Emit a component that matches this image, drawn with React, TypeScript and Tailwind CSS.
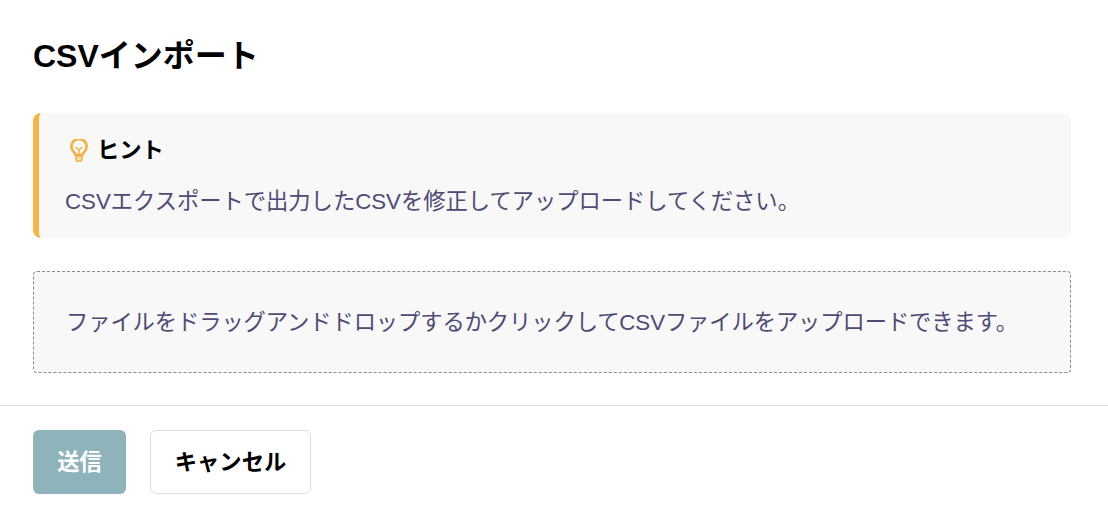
export default function App() {
  const font = { fontFamily: '"Liberation Sans", "Noto Sans CJK JP", sans-serif' };
  return (
    <div style={font} className="w-[1108px] h-[518px] bg-white flex flex-col overflow-hidden">
      <div className="pl-[33px] pr-[37px] pt-[33px] flex flex-col">
        <h1 className="text-[32px] leading-[44px] font-bold text-black h-[44px] pt-[1px]">CSVインポート</h1>
        <div className="mt-[36px] h-[125px] rounded-[8px] bg-[#f8f8f8] border-l-[6px] border-[#f6b445] pl-[26px] pt-[22px] flex flex-col">
          <div className="flex items-center h-[32px] gap-[7px]">
            <svg width="22" height="24" viewBox="0 0 22 24" fill="none" stroke="#f6b042" strokeWidth="2.6" strokeLinecap="round" strokeLinejoin="round" className="ml-[3px]">
              <path d="M7.6 16c0-1.500-.9-2.200-2.100-3.300a7.600 7.600 0 1 1 11 0c-1.200 1.100-2.100 1.800-2.100 3.300z" />
              <path d="M8 17h6v3.600a1.600 1.600 0 0 1-1.600 1.600H9.600a1.600 1.600 0 0 1-1.600-1.600z" strokeWidth="1.500" fill="#fbdca8" />
              <path d="M11 15.500v-4.500M8.200 8.500 11 11l2.800-2.500" strokeWidth="1.500" />
            </svg>
            <span className="text-[22.3px] font-bold text-black leading-[32px]">ヒント</span>
          </div>
          <p className="mt-[19px] text-[22.3px] leading-[32px] text-[#4f4b75] tracking-[-0.02px]">CSVエクスポートで出力したCSVを修正してアップロードしてください。</p>
        </div>
        <div className="mt-[33px] h-[102px] rounded-[4px] bg-[#f8f8f8] border border-dashed border-[#8c8c8c] pl-[32px] pt-[2px] flex items-center">
          <p className="text-[22.3px] leading-[32px] text-[#4f4b75] tracking-[-0.1px]">ファイルをドラッグアンドドロップするかクリックしてCSVファイルをアップロードできます。</p>
        </div>
      </div>
      <div className="mt-[32px] border-t border-[#e0e0e0] px-[33px] pt-[24px] flex gap-[24px]">
        <button className="w-[93px] h-[64px] rounded-[6px] bg-[#8eb3bb] text-white text-[22.3px] font-bold pt-[2px]">送信</button>
        <button className="w-[161px] h-[64px] rounded-[6px] bg-white border border-[#dedede] text-black text-[22.3px] font-bold pt-[2px]">キャンセル</button>
      </div>
    </div>
  );
}
